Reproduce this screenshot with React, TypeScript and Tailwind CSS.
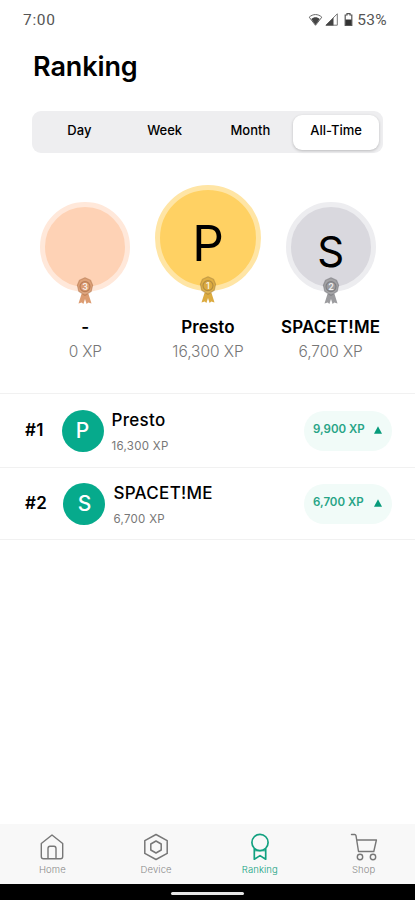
import React from "react";

type Palette = { dark: string; mid: string };

function Medal({ place, dark, mid }: { place: string } & Palette) {
  return (
    <svg width="18" height="28" viewBox="0 0 18 28" className="absolute -bottom-[18px] left-1/2 -translate-x-1/2">
      <path d="M5.500 17 2.500 26.500l3.200-1 1.700 1.500L9 22l1.600 5 1.700-1.500 3.200 1L12.500 17Z" fill={mid} />
      <path d="M9 .8 14.500 3.200 16.600 8.200 15.200 14.200 9 18.400 2.800 14.200 1.400 8.200 3.500 3.200Z" fill={mid} fillOpacity="0.9" stroke={dark} strokeOpacity="0.55" strokeWidth="1.200" strokeLinejoin="round" />
      <circle cx="9" cy="9.600" r="5" fill={mid} stroke={dark} strokeOpacity="0.8" strokeWidth="1.200" />
      <text x="9" y="12.800" textAnchor="middle" fontSize="9" fontWeight="600" fill="#fff" fillOpacity="0.85">
        {place}
      </text>
    </svg>
  );
}

function Tabs() {
  return (
    <div className="mx-8 mt-[26px] flex h-[42px] w-[351px] items-center rounded-[9px] bg-[#eeeef0] px-1 text-[13px] font-medium">
      <div className="w-[86px] pb-[3px] pl-[1px] text-center">Day</div>
      <div className="w-[86px] pb-[3px] text-center">Week</div>
      <div className="w-[86px] pb-[3px] text-center">Month</div>
      <div className="flex h-[35px] w-[86px] items-center justify-center rounded-[9px] bg-white pb-[3px] shadow-[0_1px_3px_rgba(0,0,0,0.22)]">
        All-Time
      </div>
    </div>
  );
}

function Podium() {
  return (
    <div className="mx-6 mt-8 grid w-[368px] grid-cols-3">
      <div className="flex flex-col items-center">
        <div className="relative mt-[17px] h-[90px] w-[90px] rounded-full border-[5px] border-[#ffe8da] bg-[#fed2b5]">
          <Medal place="3" dark="#b0764f" mid="#dc9c72" />
        </div>
        <div className="mt-[23px] text-[17px] leading-6 font-semibold">-</div>
        <div className="mt-[1px] text-[15.500px] leading-6 font-light tracking-[-0.2px] text-[#777]">0 XP</div>
      </div>
      <div className="flex flex-col items-center">
        <div className="relative mb-[1px] flex h-[106px] w-[106px] items-center justify-center rounded-full border-[5px] border-[#ffe5a5] bg-[#ffd163] pt-[11px] text-[49.500px] leading-none">
          P
          <Medal place="1" dark="#a8853f" mid="#dcab40" />
        </div>
        <div className="mt-[23px] text-[17px] leading-6 font-semibold tracking-[0.1px]">Presto</div>
        <div className="mt-[1px] text-[15.500px] leading-6 font-light whitespace-nowrap text-[#777] tracking-[-0.05px]">16,300 XP</div>
      </div>
      <div className="flex flex-col items-center">
        <div className="relative mt-[17px] flex h-[90px] w-[90px] items-center justify-center rounded-full border-[5px] border-[#ededf0] bg-[#d9d8de] pt-[9px] text-[42px] leading-[34px]">
          S
          <Medal place="2" dark="#77777b" mid="#9c9c9f" />
        </div>
        <div className="mt-[23px] text-[17px] leading-6 font-semibold tracking-[0.15px] whitespace-nowrap">SPACET!ME</div>
        <div className="mt-[1px] text-[15.500px] leading-6 font-light tracking-[-0.1px] text-[#777]">6,700 XP</div>
      </div>
    </div>
  );
}

type RowProps = { rank: string; letter: string; name: string; xp: string; gain: string; height: string };

function Row({ rank, letter, name, xp, gain, height }: RowProps) {
  return (
    <div className={`flex items-center border-b border-[#f1f1f1] pr-[23px] pl-[25px] ${height}`}>
      <span className="min-w-[20px] text-[17px] font-semibold tracking-[0.2px]">{rank}</span>
      <div className="ml-[16.500px] flex h-[42px] w-[42px] items-center justify-center rounded-full bg-[#06aa8c] text-[21px] font-medium text-white">
        {letter}
      </div>
      <div className="ml-[8px] flex-1">
        <div className="text-[17px] leading-6 font-medium tracking-[0.3px]">{name}</div>
        <div className="mt-[6px] text-[11.500px] leading-4 tracking-[0.3px] text-[#777]">{xp}</div>
      </div>
      <div className="flex h-10 w-[88px] items-center rounded-full bg-[#f1fbf8] pb-[1px] pl-[9px] text-[11.500px] font-semibold text-[#27a486]">
        <span className="w-[61px] whitespace-nowrap">{gain}</span>
        <svg width="8" height="8" viewBox="0 0 8 8"><path d="M4 .3 8 7.800H0Z" fill="#079b7b" /></svg>
      </div>
    </div>
  );
}

function HomeIcon() {
  return (
    <svg width="26" height="28" viewBox="0 0 26 28" fill="none" stroke="#777" strokeWidth="1.400" strokeLinejoin="round">
      <path d="M2.300 10.500 13 2l10.700 8.500v13a2.200 2.200 0 0 1-2.200 2.200h-17a2.200 2.200 0 0 1-2.200-2.200Z" />
      <path d="M9 25.500V15.500c0-1.400.8-2.200 2-2.200h4c1.200 0 2 .8 2 2.200v10" />
    </svg>
  );
}

function DeviceIcon() {
  return (
    <svg width="26" height="28" viewBox="0 0 26 28" fill="none" stroke="#777" strokeWidth="1.500" strokeLinejoin="round">
      <path d="M13 1.500 24.200 7.600v12.800L13 26.500 1.800 20.400V7.600Z" />
      <path d="M13 8 18.200 11v6L13 20 7.800 17v-6Z" />
    </svg>
  );
}

function AwardIcon() {
  return (
    <svg width="26" height="28" viewBox="0 0 26 28" fill="none" stroke="#12a180" strokeWidth="1.700" strokeLinejoin="round">
      <circle cx="13" cy="9.500" r="8.100" />
      <path d="M7.300 15.500v10.700L13 22.600l5.700 3.600V15.500" />
      <path d="M7.300 17.800h11.400" strokeWidth="1" />
    </svg>
  );
}

function CartIcon() {
  return (
    <svg width="28" height="28" viewBox="0 0 28 28" fill="none" stroke="#777" strokeWidth="1.400" strokeLinejoin="round" strokeLinecap="round">
      <path d="M1.500 1.500h3.200c.8 0 1.100.4 1.300 1.200L8.500 18.500h15.300l2.600-11.500H6.700" />
      <circle cx="10" cy="24" r="2.700" />
      <circle cx="23" cy="24" r="2.700" />
    </svg>
  );
}

function NavItem({ label, active, children }: { label: string; active?: boolean; children: React.ReactNode }) {
  return (
    <div className={`flex flex-1 flex-col items-center pt-[9px] pl-[1px] text-[9.500px] leading-3 font-light tracking-[0.1px] ${active ? "text-[#12a180]" : "text-[#888]"}`}>
      {children}
      <span className="mt-[3px]">{label}</span>
    </div>
  );
}

export default function App() {
  return (
    <div className="flex h-[900px] w-[415px] flex-col overflow-hidden bg-white font-['Inter',sans-serif] text-black">
      <div className="flex h-10 items-center justify-between pt-[1px] pr-7 pl-[23px] font-['Roboto',sans-serif] text-[15.500px] text-[#555]">
        <span className="tracking-[0.7px]">7:00</span>
        <div className="flex items-center">
          <svg className="mb-[2px]" width="15" height="13" viewBox="0 0 14 13" fill="none">
            <path d="M.7 4.200C4.300.7 9.700.7 13.300 4.200L7 12.300Z" stroke="#666" strokeWidth="1" />
            <path d="M2.800 6c2.500-2.200 5.900-2.200 8.400 0L7 12Z" fill="#444" />
          </svg>
          <svg className="mb-[2px] ml-[2px]" width="13" height="13" viewBox="0 0 13 13">
            <path d="M12.300.8v11.400H.9Z" fill="none" stroke="#777" />
            <path d="M8.500 4.500v8H.5Z" fill="#444" />
          </svg>
          <svg className="mb-[2px] ml-[6px]" width="9" height="13" viewBox="0 0 8 13">
            <path d="M2.500 2V.6h3V2h1.800v10.400H.7V2Z" fill="none" stroke="#555" strokeWidth="1.200" />
            <path d="M1 6.500h6V12H1Z" fill="#333" />
          </svg>
          <span className="ml-1 tracking-[0.3px]">53%</span>
        </div>
      </div>
      <h1 className="mt-[9px] ml-[33px] text-[27px] leading-9 font-semibold tracking-[-0.1px]">Ranking</h1>
      <Tabs />
      <Podium />
      <div className="mt-[29px] border-t border-[#f1f1f1]">
        <Row rank="#1" letter="P" name="Presto" xp="16,300 XP" gain="9,900 XP" height="h-[74px]" />
        <Row rank="#2" letter="S" name="SPACET!ME" xp="6,700 XP" gain="6,700 XP" height="h-[72px]" />
      </div>
      <div className="mt-auto flex h-[60px] bg-[#f8f8f8]">
        <NavItem label="Home"><HomeIcon /></NavItem>
        <NavItem label="Device"><DeviceIcon /></NavItem>
        <NavItem label="Ranking" active><AwardIcon /></NavItem>
        <NavItem label="Shop"><CartIcon /></NavItem>
      </div>
      <div className="flex h-4 justify-center bg-black pt-2">
        <div className="h-[3px] w-[73px] rounded-full bg-[#e5e5e5]" />
      </div>
    </div>
  );
}
